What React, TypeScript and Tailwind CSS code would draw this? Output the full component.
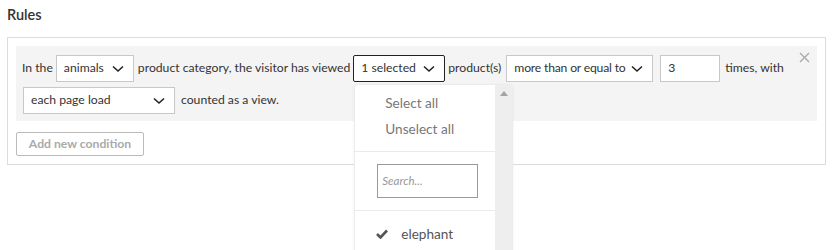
import React from "react";

const Chevron = () => (
  <svg width="12" height="8" viewBox="0 0 12 8" className="shrink-0 ml-[3px]">
    <path d="M1 1.5 L6 6 L11 1.5" fill="none" stroke="#222" strokeWidth="1.6" />
  </svg>
);

function Select({ label, width, dark, tight }: { label: string; width: string; dark?: boolean; tight?: boolean }) {
  return (
    <div
      className={`flex h-[27px] items-center justify-between whitespace-nowrap bg-white pl-[7px] pr-[9px] text-[12.2px] text-[#333] ${width} ${
        dark ? "border border-[#222] rounded-[2px]" : "border border-[#c8c8c8]"
      }`}
    >
      <span className={tight ? "tracking-[-0.2px]" : ""}>{label}</span>
      <Chevron />
    </div>
  );
}

export default function App() {
  return (
    <div className="w-[833px] h-[250px] overflow-hidden bg-white px-[7px] pt-[5px] text-[#333]" style={{ fontFamily: "Lato, 'Liberation Sans', sans-serif" }}>
      <div className="text-[14.5px] font-semibold text-[#333] leading-[20px]">Rules</div>
      <div className="mt-[12px] border border-[#dcdcdc] p-[8px] pb-[8px]">
        <div className="bg-[#f4f4f4] pl-[6px] pr-[6px] pt-[9px] pb-[7px] relative">
          <div className="flex items-center whitespace-nowrap text-[12.2px] text-[#333] h-[27px]">
            <span>In the</span>
            <div className="ml-[3px]"><Select label="animals" width="w-[78px]" /></div>
            <span className="ml-[4px]">product category, the visitor has viewed</span>
            <div className="ml-[3px] relative">
              <Select label="1 selected" width="w-[92px]" dark />
              <div className="absolute left-[1px] top-[29px] w-[159px] h-[180px] bg-white border border-[#ececec] rounded-[3px] flex shadow-[0_1px_3px_rgba(0,0,0,0.06)] z-10">
                <div className="flex-1 flex flex-col">
                  <div className="pt-[5px] pb-[9px] pl-[30px] text-[13.6px] text-[#777]">
                    <div className="h-[26px] leading-[26px]">Select all</div>
                    <div className="h-[26px] leading-[26px]">Unselect all</div>
                  </div>
                  <div className="border-t border-[#eaeaea]" />
                  <div className="pl-[22px] py-[12px]">
                    <div className="w-[101px] h-[34px] border border-[#9a9a9a] pl-[4px] flex items-center text-[11.5px] italic text-[#999]">Search...</div>
                  </div>
                  <div className="border-t border-[#eaeaea]" />
                  <div className="flex items-center pl-[21px] pt-[13px] text-[13.6px] text-[#555]">
                    <svg width="12" height="10" viewBox="0 0 12 10">
                      <path d="M1 5 L4.5 8.5 L11 1.5" fill="none" stroke="#555" strokeWidth="2.6" />
                    </svg>
                    <span className="ml-[13px]">elephant</span>
                  </div>
                </div>
                <div className="w-[17px] bg-[#eeeeee] flex justify-center pt-[6px]">
                  <svg width="8" height="5" viewBox="0 0 8 5"><path d="M0 5 L4 0 L8 5 Z" fill="#a3a3a3" /></svg>
                </div>
              </div>
            </div>
            <span className="ml-[3px]">product(s)</span>
            <div className="ml-[5px]"><Select label="more than or equal to" width="w-[147px]" tight /></div>
            <div className="ml-[7px] w-[60px] h-[27px] border border-[#c8c8c8] bg-white pl-[7px] flex items-center">3</div>
            <span className="ml-[5px]">times, with</span>
          </div>
          <div className="flex items-center whitespace-nowrap text-[12.2px] text-[#333] mt-[5px] h-[27px]">
            <div className="ml-[1px]"><Select label="each page load" width="w-[152px]" /></div>
            <span className="ml-[6px]">counted as a view.</span>
          </div>
          <svg className="absolute right-[7px] top-[6px]" width="11" height="11" viewBox="0 0 11 11">
            <path d="M1 1 L10 10 M10 1 L1 10" stroke="#aaa" strokeWidth="1.4" />
          </svg>
        </div>
        <div className="mt-[11px] w-[128px] h-[24px] border border-[#bbb] rounded-[2px] flex items-center justify-center text-[12.2px] font-bold text-[#aaa]">
          Add new condition
        </div>
      </div>
    </div>
  );
}
